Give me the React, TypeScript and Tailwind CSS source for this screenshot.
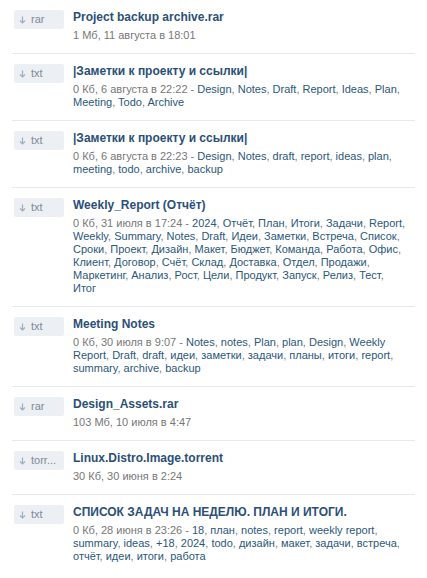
import React from "react";

type Row = {
  ext: string;
  title: string;
  meta: string;
  tags?: string[];
};

const rows: Row[] = [
  { ext: "rar", title: "Project backup archive.rar", meta: "1 Мб, 11 августа в 18:01" },
  {
    ext: "txt",
    title: "|Заметки к проекту и ссылки|",
    meta: "0 Кб, 6 августа в 22:22 - ",
    tags: ["Design", "Notes", "Draft", "Report", "Ideas", "Plan", "Meeting", "Todo", "Archive"],
  },
  {
    ext: "txt",
    title: "|Заметки к проекту и ссылки|",
    meta: "0 Кб, 6 августа в 22:23 - ",
    tags: ["Design", "Notes", "draft", "report", "ideas", "plan", "meeting", "todo", "archive", "backup"],
  },
  {
    ext: "txt",
    title: "Weekly_Report (Отчёт)",
    meta: "0 Кб, 31 июля в 17:24 - ",
    tags: [
      "2024", "Отчёт", "План", "Итоги", "Задачи", "Report", "Weekly", "Summary", "Notes", "Draft",
      "Идеи", "Заметки", "Встреча", "Список", "Сроки", "Проект", "Дизайн", "Макет", "Бюджет",
      "Команда", "Работа", "Офис", "Клиент", "Договор", "Счёт", "Склад", "Доставка", "Отдел",
      "Продажи", "Маркетинг", "Анализ", "Рост", "Цели", "Продукт", "Запуск", "Релиз", "Тест", "Итог",
    ],
  },
  {
    ext: "txt",
    title: "Meeting Notes",
    meta: "0 Кб, 30 июля в 9:07 - ",
    tags: ["Notes", "notes", "Plan", "plan", "Design", "Weekly Report", "Draft", "draft", "идеи", "заметки", "задачи", "планы", "итоги", "report", "summary", "archive", "backup"],
  },
  { ext: "rar", title: "Design_Assets.rar", meta: "103 Мб, 10 июля в 4:47" },
  { ext: "torr...", title: "Linux.Distro.Image.torrent", meta: "30 Кб, 30 июня в 2:24" },
  {
    ext: "txt",
    title: "СПИСОК ЗАДАЧ НА НЕДЕЛЮ. ПЛАН И ИТОГИ.",
    meta: "0 Кб, 28 июня в 23:26 - ",
    tags: [
      "18", "план", "notes", "report", "weekly report", "summary", "ideas", "+18", "2024", "todo",
      "дизайн", "макет", "задачи", "встреча", "отчёт", "идеи", "итоги", "работа",
    ],
  },
];

function Badge({ ext }: { ext: string }) {
  return (
    <div className="w-[50px] h-[19px] shrink-0 bg-[#eceff3] rounded-[2px] flex items-center pl-[5px] gap-[5px] text-[11px] text-[#7f8a96]">
      <svg width="7" height="8" viewBox="0 0 7 8" className="shrink-0">
        <path d="M3.5 0.5 V7 M1 4.5 L3.5 7 L6 4.5" stroke="#a3adb8" strokeWidth="1.2" fill="none" />
      </svg>
      <span>{ext}</span>
    </div>
  );
}

export default function App() {
  return (
    <div
      className="w-[427px] min-h-[578px] bg-white text-[11px] leading-[13px]"
      style={{ fontFamily: '"Liberation Sans", Arial, sans-serif' }}
    >
      <div className="px-[12px]">
        {rows.map((r, i) => (
          <div
            key={i}
            className={`flex gap-[9px] pl-[2px] pt-[10px] pb-[11px] ${i < rows.length - 1 ? "border-b border-[#e7e8ec]" : ""}`}
          >
            <Badge ext={r.ext} />
            <div className="flex-1 min-w-0 pr-[6px]">
              <div className="font-bold text-[12px] leading-[15px] text-[#2b4f78]">{r.title}</div>
              <div className="mt-[4px] text-[#777]">
                {r.meta}
                {r.tags?.map((t, j) => (
                  <span key={j}>
                    <span className="text-[#2b587a]">{t}</span>
                    {j < r.tags!.length - 1 ? ", " : ""}
                  </span>
                ))}
              </div>
            </div>
          </div>
        ))}
      </div>
    </div>
  );
}
